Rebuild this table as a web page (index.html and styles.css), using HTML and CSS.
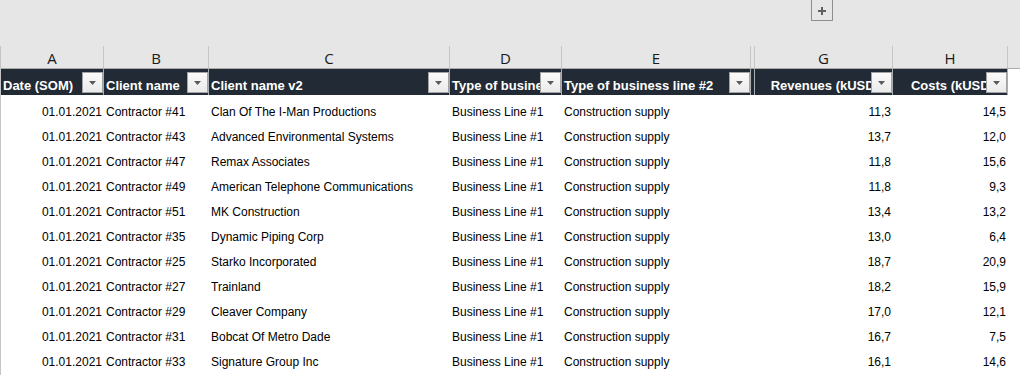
FILE: index.html
```html
<!DOCTYPE html>
<html>
<head>
<meta charset="utf-8">
<link rel="stylesheet" href="styles.css">
</head>
<body>
<div class="toolbar">
  <div class="outline-btn"><svg width="8" height="8" viewBox="0 0 8 8"><rect x="0" y="3" width="8" height="2" fill="#5f5f5f"/><rect x="3" y="0" width="2" height="8" fill="#5f5f5f"/></svg></div>
</div>
<div class="sheet">
  <div class="grid letters">
    <div class="lc">A</div><div class="lc">B</div><div class="lc">C</div><div class="lc">D</div><div class="lc">E</div><div class="lc hid"></div><div class="lc">G</div><div class="lc">H</div><div class="lc last"></div>
  </div>
  <div class="grid head">
    <div class="hc">Date (SOM)<span class="fb"><svg width="7" height="4" viewBox="0 0 7 4"><polygon points="0,0 7,0 3.5,4" fill="#5a5a5a"/></svg></span></div>
    <div class="hc">Client name<span class="fb"><svg width="7" height="4" viewBox="0 0 7 4"><polygon points="0,0 7,0 3.5,4" fill="#5a5a5a"/></svg></span></div>
    <div class="hc">Client name v2<span class="fb"><svg width="7" height="4" viewBox="0 0 7 4"><polygon points="0,0 7,0 3.5,4" fill="#5a5a5a"/></svg></span></div>
    <div class="hc">Type of business line #1<span class="fb"><svg width="7" height="4" viewBox="0 0 7 4"><polygon points="0,0 7,0 3.5,4" fill="#5a5a5a"/></svg></span></div>
    <div class="hc">Type of business line #2<span class="fb"><svg width="7" height="4" viewBox="0 0 7 4"><polygon points="0,0 7,0 3.5,4" fill="#5a5a5a"/></svg></span></div>
    <div class="hc hid"></div>
    <div class="hc num">Revenues (kUSD)<span class="fb"><svg width="7" height="4" viewBox="0 0 7 4"><polygon points="0,0 7,0 3.5,4" fill="#5a5a5a"/></svg></span></div>
    <div class="hc num">Costs (kUSD)<span class="fb"><svg width="7" height="4" viewBox="0 0 7 4"><polygon points="0,0 7,0 3.5,4" fill="#5a5a5a"/></svg></span></div>
    <div class="hc last"></div>
  </div>
  <div class="data">
    <div class="grid row"><div class="r">01.01.2021</div><div>Contractor #41</div><div>Clan Of The I-Man Productions</div><div>Business Line #1</div><div>Construction supply</div><div></div><div class="r">11,3</div><div class="r">14,5</div><div></div></div>
    <div class="grid row"><div class="r">01.01.2021</div><div>Contractor #43</div><div>Advanced Environmental Systems</div><div>Business Line #1</div><div>Construction supply</div><div></div><div class="r">13,7</div><div class="r">12,0</div><div></div></div>
    <div class="grid row"><div class="r">01.01.2021</div><div>Contractor #47</div><div>Remax Associates</div><div>Business Line #1</div><div>Construction supply</div><div></div><div class="r">11,8</div><div class="r">15,6</div><div></div></div>
    <div class="grid row"><div class="r">01.01.2021</div><div>Contractor #49</div><div>American Telephone Communications</div><div>Business Line #1</div><div>Construction supply</div><div></div><div class="r">11,8</div><div class="r">9,3</div><div></div></div>
    <div class="grid row"><div class="r">01.01.2021</div><div>Contractor #51</div><div>MK Construction</div><div>Business Line #1</div><div>Construction supply</div><div></div><div class="r">13,4</div><div class="r">13,2</div><div></div></div>
    <div class="grid row"><div class="r">01.01.2021</div><div>Contractor #35</div><div>Dynamic Piping Corp</div><div>Business Line #1</div><div>Construction supply</div><div></div><div class="r">13,0</div><div class="r">6,4</div><div></div></div>
    <div class="grid row"><div class="r">01.01.2021</div><div>Contractor #25</div><div>Starko Incorporated</div><div>Business Line #1</div><div>Construction supply</div><div></div><div class="r">18,7</div><div class="r">20,9</div><div></div></div>
    <div class="grid row"><div class="r">01.01.2021</div><div>Contractor #27</div><div>Trainland</div><div>Business Line #1</div><div>Construction supply</div><div></div><div class="r">18,2</div><div class="r">15,9</div><div></div></div>
    <div class="grid row"><div class="r">01.01.2021</div><div>Contractor #29</div><div>Cleaver Company</div><div>Business Line #1</div><div>Construction supply</div><div></div><div class="r">17,0</div><div class="r">12,1</div><div></div></div>
    <div class="grid row"><div class="r">01.01.2021</div><div>Contractor #31</div><div>Bobcat Of Metro Dade</div><div>Business Line #1</div><div>Construction supply</div><div></div><div class="r">16,7</div><div class="r">7,5</div><div></div></div>
    <div class="grid row"><div class="r">01.01.2021</div><div>Contractor #33</div><div>Signature Group Inc</div><div>Business Line #1</div><div>Construction supply</div><div></div><div class="r">16,1</div><div class="r">14,6</div><div></div></div>
  </div>
</div>
</body>
</html>
```

FILE: styles.css
```css
html, body {
  margin: 0;
  padding: 0;
  background: #ffffff;
  overflow: hidden;
  font-family: "Liberation Sans", Arial, sans-serif;
}
.toolbar {
  position: relative;
  height: 46px;
  background: #e6e6e6;
}
.outline-btn {
  position: absolute;
  left: 811px;
  top: -1px;
  width: 20px;
  height: 19px;
  border: 1px solid #8e8e8e;
  display: flex;
  align-items: center;
  justify-content: center;
  padding-top: 1px;
  box-sizing: content-box;
}
.outline-btn svg { display: block; }
.sheet {
  border-left: 1px solid #c4c4c4;
}
.grid {
  display: grid;
  grid-template-columns: 103px 105px 241px 112px 189px 4px 138px 115px 1fr;
}
.letters {
  height: 23px;
  box-sizing: border-box;
  background: #e6e6e6;
  border-bottom: 1px solid #ababab;
}
.lc {
  border-right: 1px solid #c6c6c6;
  text-align: center;
  font-family: "Open Sans", "Liberation Sans", sans-serif;
  font-size: 15px;
  line-height: 20px;
  padding-top: 2px;
  color: #1a1a1a;
}
.lc.last { border-right: 0; }
.head {
  height: 26px;
  background: #222b35;
}
.hc {
  position: relative;
  overflow: hidden;
  white-space: nowrap;
  border-right: 1px solid #a9adb2;
  color: #ffffff;
  font-weight: bold;
  font-size: 13px;
  line-height: 18px;
  padding: 8px 2px 0 2px;
}
.hc.num {
  text-align: right;
  padding-right: 13px;
}
.hc.hid { padding: 0; }
.hc.last {
  background: #ffffff;
  border-right: 0;
}
.fb {
  position: absolute;
  right: 0;
  top: 3px;
  width: 19px;
  height: 19px;
  border: 1px solid #a3a3a3;
  background: linear-gradient(#fbfbfb, #eaeaea);
  display: flex;
  align-items: center;
  justify-content: center;
}
.fb svg { display: block; }
.data {
  padding-top: 5px;
}
.row {
  height: 25px;
  font-size: 12px;
  line-height: 25px;
  color: #000;
}
.row > div {
  padding: 0 2px;
  white-space: nowrap;
  overflow: hidden;
}
.row .r { text-align: right; }
```
